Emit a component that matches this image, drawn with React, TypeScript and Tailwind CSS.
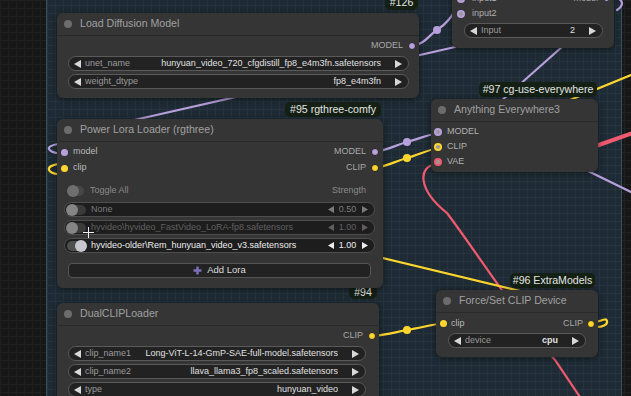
import React from "react";

const FONT = "font-['Liberation_Sans',Arial,sans-serif]";

function ArrowL({ color = "#d8d8d8", w = 7, h = 8 }: { color?: string; w?: number; h?: number }) {
  return (
    <svg width={w} height={h} viewBox="0 0 7 8" className="shrink-0">
      <polygon points="7,0 7,8 0,4" fill={color} />
    </svg>
  );
}
function ArrowR({ color = "#d8d8d8", w = 7, h = 8 }: { color?: string; w?: number; h?: number }) {
  return (
    <svg width={w} height={h} viewBox="0 0 7 8" className="shrink-0">
      <polygon points="0,0 0,8 7,4" fill={color} />
    </svg>
  );
}

function Node({ cls, title, children }: { cls: string; title: string; children?: React.ReactNode }) {
  return (
    <div className={`absolute flex flex-col rounded-[6px] bg-[#353535] shadow-[0_1px_6px_rgba(0,0,0,0.55)] ${cls}`}>
      <div className="flex h-[23px] shrink-0 items-center gap-[8px] border-b border-[#2a2a2a] pl-[7px]">
        <span className="h-[8px] w-[8px] rounded-full bg-[#6c6c6c]" />
        <span className="whitespace-nowrap text-[10.6px] text-[#a0a0a0]">{title}</span>
      </div>
      {children}
    </div>
  );
}

function Widget({ label, value, cls, bold }: { label: string; value: string; cls: string; bold?: boolean }) {
  return (
    <div className={`flex h-[15px] shrink-0 items-center rounded-full border border-[#5a5a5a] bg-[#222222] pl-[5px] pr-[6px] text-[9px] ${cls}`}>
      <ArrowL />
      <span className="ml-[4px] whitespace-nowrap text-[#9b9b9b]">{label}</span>
      <span className={`min-w-0 flex-1 overflow-hidden whitespace-nowrap text-right text-[#e0e0e0] ${bold ? "font-bold" : ""}`}>{value}</span>
      <span className="ml-[14px] flex">
        <ArrowR />
      </span>
    </div>
  );
}

function Badge({ cls, text }: { cls: string; text: string }) {
  return (
    <div className={`absolute flex items-center justify-center rounded-[5px] bg-[#142014] text-[10.6px] text-[#e4e4e4] whitespace-nowrap ${cls}`}>
      {text}
    </div>
  );
}

function LoraRow({ on, name, val, nameCls, valColor }: { on: boolean; name: string; val: string; nameCls: string; valColor: string }) {
  return (
    <div className="flex h-[15px] shrink-0 items-center rounded-full border border-[#4e4e4e] bg-[#1d1d1d] pl-[2px] pr-[6px] text-[9px]">
      <div className={`relative h-[10px] w-[19px] shrink-0 rounded-full ${on ? "bg-[#4f4f4f]" : "bg-[#3a3a3a]"}`}>
        <div className={`absolute top-[-1px] h-[12px] w-[12px] rounded-full ${on ? "right-[-1px] bg-[#c6c6ce]" : "left-[-1px] bg-[#858585]"}`} />
      </div>
      <span className={`ml-[5px] min-w-0 flex-1 overflow-hidden whitespace-nowrap ${nameCls}`}>{name}</span>
      <span className="flex items-center">
        <ArrowL color={valColor} w={6} h={7} />
        <span className="ml-[4px] w-[19px] text-center" style={{ color: valColor }}>{val}</span>
        <span className="ml-[5px] flex">
          <ArrowR color={valColor} w={6} h={7} />
        </span>
      </span>
    </div>
  );
}

const P = "#b7a0dc";
const Y = "#ffd62e";
const R = "#f05a70";

export default function App() {
  return (
    <div
      className={`relative h-[396px] w-[631px] overflow-hidden bg-[#171717] bg-[linear-gradient(to_right,#202020_1px,transparent_1px),linear-gradient(to_bottom,#202020_1px,transparent_1px)] bg-[size:8px_8px] ${FONT}`}
    >
      {/* group */}
      <div className="absolute left-[46px] top-[-20px] h-[440px] w-[576px] border border-[#35505f] bg-[#1e2b34] bg-[linear-gradient(to_right,#25343f_1px,transparent_1px),linear-gradient(to_bottom,#25343f_1px,transparent_1px)] bg-[size:8px_8px]" />

      {/* wires */}
      <svg className="absolute inset-0" width={631} height={396} fill="none" strokeLinecap="round">
        <path d="M 130 121 L 455 47" stroke={P} strokeWidth={2.2} />
        <path d="M 412 46 C 425 44, 428 36, 437 30 S 452 18, 462 -2" stroke={P} strokeWidth={2.2} />
        <circle cx={437} cy={30} r={4} fill={P} />
        <path d="M 563 46 L 500 102" stroke={P} strokeWidth={2.2} />
        <path d="M 610 -3 C 622 -3, 626 4, 617 10" stroke={P} strokeWidth={2.2} />
        <path d="M 631 75 L 570 100" stroke={Y} strokeWidth={2.2} />
        <path d="M 588 171 L 633 193" stroke={P} strokeWidth={2.2} />
        <path d="M 596 146 L 633 133" stroke={R} strokeWidth={4} />
        <path d="M 437 164 C 417 166, 418 190, 447 213 C 475 250, 520 320, 555 360 L 582 400" stroke={R} strokeWidth={2.2} />
        <path d="M 370 255 L 520 291" stroke={Y} strokeWidth={2.2} />
        <path d="M 375 152 C 388 150, 396 145, 407 142 S 428 135, 438 133" stroke={P} strokeWidth={2.2} />
        <circle cx={407} cy={142} r={4} fill={P} />
        <path d="M 375 168 C 388 166, 396 161, 407 158 S 428 150, 438 148" stroke={Y} strokeWidth={2.2} />
        <circle cx={407} cy={158} r={4} fill={Y} />
        <path d="M 373 336 C 386 335, 396 332, 407 330 S 432 325, 443 323" stroke={Y} strokeWidth={2.2} />
        <circle cx={407} cy={330} r={4} fill={Y} />
        <path d="M 591 323 C 600 322, 606 317, 607 321 C 608 325, 602 327, 597 327" stroke={Y} strokeWidth={2.2} />
        <path d="M 58 144 C 52 145, 48 147, 49 149 C 50 151, 54 153, 57 153" stroke={P} strokeWidth={2.2} />
        <path d="M 58 164 C 52 165, 48 167, 49 170 C 50 172, 54 174, 57 174" stroke={Y} strokeWidth={2.2} />
      </svg>

      {/* top right node (partial) */}
      <Node cls="left-[452px] top-[-34px] w-[162px] h-[82px]" title="Switch any">
        <div className="mt-[2px] flex h-[15px] items-center pl-[5px] pr-[4px] text-[9px] text-[#b0b0b0]">
          <span className="h-[8px] w-[8px] rounded-full border-2 border-[#b7a0dc] bg-[#9a9a9a]" />
          <span className="ml-[7px] flex-1">input1</span>
          <span className="text-[#a8a8a8]">model</span>
          <span className="ml-[5px] h-[7px] w-[7px] rounded-full border border-[#222] bg-[#b7a0dc]" />
        </div>
        <div className="flex h-[15px] items-center pl-[5px] text-[9px] text-[#b0b0b0]">
          <span className="h-[8px] w-[8px] rounded-full border-2 border-[#b7a0dc] bg-[#9a9a9a]" />
          <span className="ml-[7px]">input2</span>
        </div>
        <Widget cls="mt-[2px] ml-[12px] mr-[11px]" label="Input" value="2" />
      </Node>
      <Badge cls="left-[385px] top-[-5px] w-[33px] h-[15px]" text="#126" />

      {/* Load Diffusion Model */}
      <Node cls="left-[57px] top-[13px] w-[362px] h-[85px]" title="Load Diffusion Model">
        <div className="mt-[2px] flex h-[16px] items-center justify-end pr-[3px] text-[9px] text-[#a8a8a8]">
          <span>MODEL</span>
          <span className="ml-[5px] h-[8px] w-[8px] rounded-full border border-[#222] bg-[#b7a0dc]" />
        </div>
        <Widget cls="mt-[2px] ml-[11px] mr-[10px]" label="unet_name" value="hunyuan_video_720_cfgdistill_fp8_e4m3fn.safetensors" />
        <Widget cls="mt-[3px] ml-[11px] mr-[10px]" label="weight_dtype" value="fp8_e4m3fn" />
      </Node>

      {/* Power Lora Loader */}
      <Badge cls="left-[349px] top-[286px] w-[28px] h-[13px]" text="#94" />
      <Badge cls="left-[285px] top-[102px] w-[96px] h-[15px]" text="#95 rgthree-comfy" />
      <Node cls="left-[57px] top-[119px] w-[326px] h-[169px]" title="Power Lora Loader (rgthree)">
        <div className="mt-[2px] flex h-[16px] items-center pl-[4px] pr-[4px] text-[9px]">
          <span className="h-[7px] w-[7px] rounded-full bg-[#b7a0dc]" />
          <span className="ml-[5px] flex-1 text-[#b8b8b8]">model</span>
          <span className="text-[#a8a8a8]">MODEL</span>
          <span className="ml-[5px] h-[8px] w-[8px] rounded-full border border-[#222] bg-[#b7a0dc]" />
        </div>
        <div className="flex h-[16px] items-center pl-[4px] pr-[4px] text-[9px]">
          <span className="h-[7px] w-[7px] rounded-full bg-[#ffd62e]" />
          <span className="ml-[5px] flex-1 text-[#b8b8b8]">clip</span>
          <span className="text-[#a8a8a8]">CLIP</span>
          <span className="ml-[5px] h-[8px] w-[8px] rounded-full border border-[#222] bg-[#ffd62e]" />
        </div>
        <div className="mt-[8px] flex h-[14px] items-center pl-[11px] pr-[17px] text-[9px] text-[#8a8a8a]">
          <div className="relative h-[10px] w-[16px] rounded-full bg-[#474747]">
            <div className="absolute left-[-1px] top-[-1px] h-[12px] w-[12px] rounded-full bg-[#6f6f6f]" />
          </div>
          <span className="ml-[6px] flex-1">Toggle All</span>
          <span>Strength</span>
        </div>
        <div className="mt-[4px] ml-[7px] mr-[8px] flex flex-col gap-[3px]">
          <LoraRow on={false} name="None" val="0.50" nameCls="text-[#7c7c7c]" valColor="#7c7c7c" />
          <LoraRow on={false} name="hyvideo\hyvideo_FastVideo_LoRA-fp8.safetensors" val="1.00" nameCls="text-[#606060]" valColor="#606060" />
          <LoraRow on={true} name="hyvideo-older\Rem_hunyuan_video_v3.safetensors" val="1.00" nameCls="text-[#eeeeee]" valColor="#eeeeee" />
        </div>
        <div className="mt-[10px] ml-[11px] mr-[12px] flex h-[15px] items-center justify-center rounded-[4px] border border-[#555] bg-[#222222] text-[9.5px] text-[#dcdcdc]">
          <svg width={9} height={9} viewBox="0 0 9 9" className="mr-[5px]">
            <path d="M4.5 0.5 V8.5 M0.5 4.5 H8.5" stroke="#7e6fb8" strokeWidth={2.4} />
          </svg>
          Add Lora
        </div>
      </Node>

      {/* DualCLIPLoader */}
      <Node cls="left-[57px] top-[303px] w-[322px] h-[110px]" title="DualCLIPLoader">
        <div className="mt-[2px] flex h-[16px] items-center justify-end pr-[3px] text-[9px] text-[#a8a8a8]">
          <span>CLIP</span>
          <span className="ml-[5px] h-[8px] w-[8px] rounded-full border border-[#222] bg-[#ffd62e]" />
        </div>
        <Widget cls="mt-[2px] ml-[11px] mr-[13px]" label="clip_name1" value="Long-ViT-L-14-GmP-SAE-full-model.safetensors" />
        <Widget cls="mt-[3px] ml-[11px] mr-[13px]" label="clip_name2" value="llava_llama3_fp8_scaled.safetensors" />
        <Widget cls="mt-[3px] ml-[11px] mr-[13px]" label="type" value="hunyuan_video" />
      </Node>

      {/* Anything Everywhere3 */}
      <Badge cls="left-[479px] top-[82px] w-[118px] h-[15px]" text="#97 cg-use-everywhere" />
      <Node cls="left-[431px] top-[99px] w-[167px] h-[73px]" title="Anything Everywhere3">
        <div className="mt-[2px] flex flex-col pl-[3px] text-[9px] text-[#b0b0b0]">
          {[
            ["MODEL", "border-[#b7a0dc]"],
            ["CLIP", "border-[#ffd62e]"],
            ["VAE", "border-[#f05a70]"],
          ].map(([l, c]) => (
            <div key={l} className="flex h-[15px] items-center">
              <span className={`h-[8px] w-[8px] rounded-full border-2 bg-[#9a9a9a] ${c}`} />
              <span className="ml-[5px]">{l}</span>
            </div>
          ))}
        </div>
      </Node>

      {/* Force/Set CLIP Device */}
      <Badge cls="left-[510px] top-[273px] w-[85px] h-[15px]" text="#96 ExtraModels" />
      <Node cls="left-[436px] top-[290px] w-[162px] h-[67px]" title="Force/Set CLIP Device">
        <div className="mt-[3px] flex h-[15px] items-center pl-[4px] pr-[3px] text-[9px]">
          <span className="h-[7px] w-[7px] rounded-full bg-[#ffd62e]" />
          <span className="ml-[4px] flex-1 text-[#b8b8b8]">clip</span>
          <span className="text-[#a8a8a8]">CLIP</span>
          <span className="ml-[4px] h-[8px] w-[8px] rounded-full border border-[#222] bg-[#ffd62e]" />
        </div>
        <Widget cls="mt-[2px] ml-[12px] mr-[12px]" label="device" value="cpu" bold />
      </Node>

      {/* cursor */}
      <svg className="absolute left-[83px] top-[227px]" width={11} height={11} viewBox="0 0 11 11">
        <path d="M5.5 0 V11 M0 5.5 H11" stroke="#f0f0f0" strokeWidth={1} />
      </svg>
    </div>
  );
}
